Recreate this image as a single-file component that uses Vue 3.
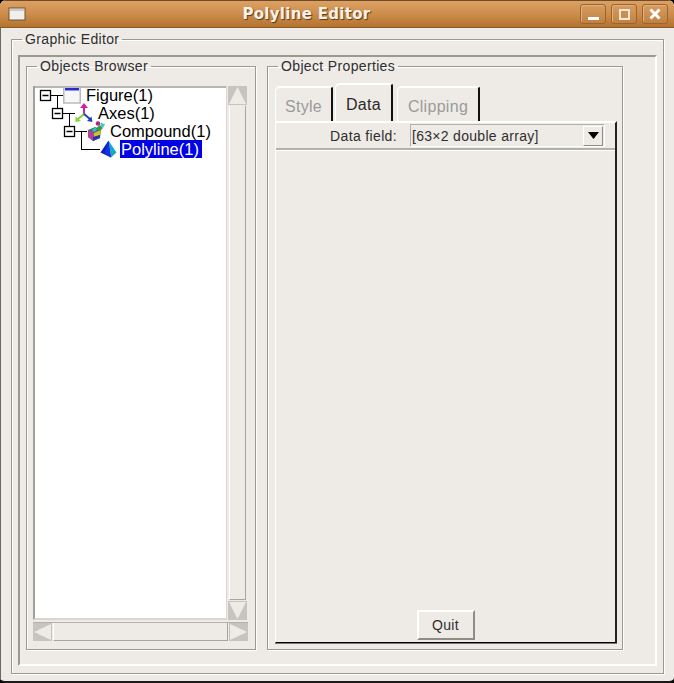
<script setup>
const rows = [
  { label: 'Figure(1)', depth: 0, kind: 'figure', box: true, drop: 22 },
  { label: 'Axes(1)', depth: 1, kind: 'axes', box: true, drop: 22 },
  { label: 'Compound(1)', depth: 2, kind: 'compound', box: true, drop: 28 },
  { label: 'Polyline(1)', depth: 3, kind: 'polyline', box: false, selected: true },
]
const tabs = [
  { label: 'Style', active: false },
  { label: 'Data', active: true },
  { label: 'Clipping', active: false },
]
</script>

<template>
  <div class="window">
    <header class="titlebar">
      <svg class="menu-icon" width="18" height="14" viewBox="0 0 18 14">
        <rect x="1" y="1" width="16" height="12" fill="#f1efec" stroke="#6f5236" />
        <rect x="2" y="2" width="14" height="2" fill="#cfcac4" />
      </svg>
      <h1 class="title">Polyline Editor</h1>
      <div class="controls">
        <span class="ctl"><i class="min"></i></span>
        <span class="ctl"><i class="max"></i></span>
        <span class="ctl">
          <svg width="14" height="14" viewBox="0 0 14 14">
            <path d="M2.5 2.5 11.5 11.5M11.5 2.5 2.5 11.5" stroke="#fff" stroke-width="3" />
          </svg>
        </span>
      </div>
    </header>

    <main class="client">
      <fieldset class="group editor">
        <legend>Graphic Editor</legend>
        <div class="sunken">
          <fieldset class="group browser">
            <legend>Objects Browser</legend>
            <div class="browser-grid">
              <div class="tree">
                <div
                  v-for="row in rows"
                  :key="row.label"
                  class="row"
                  :style="{ marginLeft: row.depth * 12 + 'px' }"
                >
                  <svg class="conn" width="23" height="18" viewBox="0 0 23 18">
                    <template v-if="row.box">
                      <path :d="`M17.5 9.5V${row.drop}M11 9.5H23`" stroke="#000" fill="none" />
                      <rect x="0.5" y="4.5" width="10" height="10" fill="#fff" stroke="#000" stroke-width="1.3" />
                      <path d="M2.5 9.5H8.5" stroke="#000" stroke-width="1.3" />
                    </template>
                    <path v-else d="M5.5 9.5H24" stroke="#000" fill="none" />
                  </svg>

                  <svg v-if="row.kind === 'figure'" class="icon" width="18" height="18" viewBox="0 0 18 18">
                    <rect x="0.75" y="1.5" width="16.5" height="15.5" fill="#f6f6f6" stroke="#b9b9c0" stroke-width="1.5" />
                    <rect x="2" y="2" width="14" height="2.5" fill="#2a2ad0" />
                  </svg>
                  <svg v-else-if="row.kind === 'axes'" class="icon" width="18" height="20" viewBox="0 0 18 20">
                    <path d="M9 11V3" stroke="#d81ea0" stroke-width="2" />
                    <path d="M5 5 9 0l4 5z" fill="#d81ea0" />
                    <path d="M9 11 3 16" stroke="#7fd33a" stroke-width="2" />
                    <path d="M0.5 13.5 0.5 19 6 18z" fill="#7fd33a" />
                    <path d="M9 11 15 16" stroke="#1f3fb8" stroke-width="2" />
                    <path d="M17.5 19 12 18 16.5 13.5z" fill="#1f3fb8" />
                  </svg>
                  <svg v-else-if="row.kind === 'compound'" class="icon" width="18" height="20" viewBox="0 0 18 20">
                    <path d="M1 9 8 6 14 9 13 17 6 20 1 16z" fill="#2f7d6c" />
                    <path d="M1 9 7 12 6 20 1 16z" fill="#c03a9a" />
                    <path d="M7 12 14 9 13 14 7 16z" fill="#d8c020" />
                    <path d="M6 16 13 14 13 17 6 20z" fill="#2436b0" />
                    <path d="M5 9 8 6 10 9 7 11z" fill="#3fb8c0" />
                    <path d="M9 7 13 4 16 7 13 10z" fill="#3f9a52" />
                    <circle cx="11" cy="2.5" r="2.3" fill="#a82a8a" />
                    <path d="M14 1.5 18 3.5 16 7 13.5 5z" fill="#4fc4c4" />
                  </svg>
                  <svg v-else class="icon poly" width="17" height="18" viewBox="0 0 17 18">
                    <path d="M8.5 0.5 0.5 12.5 11 17.5z" fill="#0c1fc4" />
                    <path d="M8.5 0.5 11 17.5 16.5 12.5z" fill="#18a8c8" />
                    <path d="M8.5 0.5 4.5 13 11 17.5z" fill="#1430e0" />
                  </svg>

                  <span class="node" :class="{ selected: row.selected }">{{ row.label }}</span>
                </div>
              </div>

              <div class="vscroll">
                <span class="arrow"><svg width="19" height="19" viewBox="0 0 19 19"><path d="M1 18 9.5 1 18 18z" fill="#eeebe7" /></svg></span>
                <span class="thumb"></span>
                <span class="arrow"><svg width="19" height="19" viewBox="0 0 19 19"><path d="M1 1 9.5 18 18 1z" fill="#eeebe7" /></svg></span>
              </div>
              <div class="hscroll">
                <span class="arrow"><svg width="19" height="18" viewBox="0 0 19 18"><path d="M18 1 1 9 18 17z" fill="#eeebe7" /></svg></span>
                <span class="thumb"></span>
                <span class="arrow"><svg width="19" height="18" viewBox="0 0 19 18"><path d="M1 1 18 9 1 17z" fill="#eeebe7" /></svg></span>
              </div>
            </div>
          </fieldset>

          <fieldset class="group props">
            <legend>Object Properties</legend>
            <div class="tabs">
              <button
                v-for="tab in tabs"
                :key="tab.label"
                class="tab"
                :class="{ active: tab.active }"
                type="button"
              >{{ tab.label }}</button>
            </div>
            <section class="panel">
              <div class="field-row">
                <label class="field-label">Data field:</label>
                <div class="combo">
                  <span class="combo-text">[63×2 double array]</span>
                  <span class="combo-btn">
                    <svg width="11" height="7" viewBox="0 0 11 7"><path d="M0 0H11L5.5 7z" fill="#000" /></svg>
                  </span>
                </div>
              </div>
              <button class="quit" type="button">Quit</button>
            </section>
          </fieldset>
        </div>
      </fieldset>
    </main>
  </div>
</template>

<style>
html, body { margin: 0; background: #000; }
</style>

<style scoped>
.window {
  width: 674px;
  height: 683px;
  box-sizing: border-box;
  display: flex;
  flex-direction: column;
  background: #eeebe7;
  border-radius: 6px 6px 5px 5px;
  border-bottom: 2px solid #1c1a18;
  overflow: hidden;
  font-family: "Liberation Sans", Arial, sans-serif;
  color: #2e2e2e;
}
.titlebar {
  height: 28px;
  flex: none;
  box-sizing: border-box;
  display: flex;
  align-items: center;
  position: relative;
  padding: 0 6px 0 8px;
  background: linear-gradient(#dba163 0%, #cf8f4e 45%, #b4732f 100%);
  border-bottom: 1px solid #8b5a26;
  border-top: 1px solid #6e4a28;
}
.menu-icon { flex: none; }
.title {
  flex: 1;
  margin: 0;
  padding-left: 7px;
  text-align: center;
  font: bold 15px "DejaVu Sans", sans-serif;
  letter-spacing: 0.3px;
  color: #f6f1e9;
  text-shadow: 1px 1px 1px #5a3a18;
}
.controls { display: flex; gap: 5px; }
.ctl {
  width: 26px;
  height: 20px;
  box-sizing: border-box;
  display: flex;
  align-items: center;
  justify-content: center;
  border: 1px solid #99642f;
  border-radius: 3px;
  background: linear-gradient(#d79c60, #bf8240);
  box-shadow: inset 1px 1px 0 #e3b17e;
}
.min { display: block; width: 11px; height: 3px; background: #fff; margin-top: 8px; }
.max { display: block; width: 11px; height: 11px; box-sizing: border-box; border: 2px solid #f3e6d6; background: #c98f52; }

.client {
  flex: 1;
  min-height: 0;
  box-sizing: border-box;
  padding: 2px 10px 7px 11px;
  border-left: 1px solid #6a6865;
}
.group {
  margin: 0;
  min-width: 0;
  box-sizing: border-box;
  border: 1px solid #9b9894;
  box-shadow: 1px 1px 0 #fff, inset 1px 1px 0 #fff;
}
.group > legend {
  font-size: 14px;
  line-height: 18px;
  letter-spacing: 0.35px;
  padding: 0 3px;
  margin-left: 4px;
}
.editor { height: 644px; padding: 7px 6px 6px 6px; margin-left: -1px; }
.sunken {
  height: 611px;
  box-sizing: border-box;
  display: flex;
  gap: 11px;
  padding: 0 0 0 6px;
  border-top: 2px solid #9b9894;
  border-left: 2px solid #9b9894;
  border-right: 2px solid #fff;
  border-bottom: 2px solid #fff;
}
.browser { width: 230px; height: 593px; padding: 0 6px 0 6px; }
.props { width: 356px; height: 593px; padding: 0 5px 0 6px; }

.browser-grid {
  display: grid;
  grid-template-columns: 194px 20px;
  grid-template-rows: 534px 19px;
  column-gap: 1px;
  row-gap: 2px;
  margin-top: 11px;
}
.tree {
  box-sizing: border-box;
  background: #fff;
  border-left: 2px solid #a3a09c;
  border-right: 1px solid #d9d6d2;
  border-bottom: 2px solid #d9d6d2;
  box-shadow: inset 0 2px 0 #b9b6b2;
  padding: 0 0 0 5px;
  color: #000;
}
.row {
  height: 18px;
  display: flex;
  align-items: center;
  position: relative;
  font-size: 16.5px;
}
.conn { flex: none; overflow: visible; }
.icon { flex: none; margin-right: 5px; }
.poly { margin-left: 1px; margin-right: 3px; }
.node { line-height: 18px; white-space: nowrap; }
.selected { background: #0000e6; color: #fff; padding: 0 3px 0 1px; }

.arrow { flex: none; display: block; background: #c6c4c1; line-height: 0; }
.vscroll { display: flex; flex-direction: column; width: 19px; }
.vscroll .thumb {
  flex: 1;
  margin: 1px;
  background: #eeebe7;
  border-left: 1px solid #fff;
  border-right: 1px solid #a8a5a1;
  border-bottom: 1px solid #a8a5a1;
}
.hscroll {
  grid-column: 1 / 3;
  display: flex;
  width: 215px;
  border-top: 1px solid #b4b1ad;
  box-sizing: border-box;
}
.hscroll .thumb {
  flex: 1;
  margin: 0 1px;
  background: #eeebe7;
  border-left: 1px solid #fff;
  border-right: 1px solid #a8a5a1;
  border-bottom: 1px solid #a8a5a1;
}

.tabs { display: flex; align-items: flex-end; gap: 2px; height: 40px; margin-top: 6px; margin-left: 1px; }
.tab {
  width: 58px;
  height: 35px;
  box-sizing: border-box;
  padding: 4px 0 0 0;
  background: #eeebe7;
  font: 16px "Liberation Sans", Arial, sans-serif;
  letter-spacing: 0.3px;
  color: #9a9a9a;
  border: 0;
  border-top: 2px solid #fff;
  border-left: 1px solid #fff;
  border-right: 2px solid #111;
  border-radius: 5px 3px 0 0;
}
.tab:last-child { width: 83px; margin-left: 2px; }
.tab.active { height: 38px; color: #2a2a2a; padding-top: 4px; }
.panel {
  width: 342px;
  height: 522px;
  margin-left: 1px;
  box-sizing: border-box;
  display: flex;
  flex-direction: column;
  align-items: center;
  border-top: 2px solid #fff;
  border-left: 1px solid #fff;
  border-right: 2px solid #222;
  border-bottom: 1px solid #000;
  box-shadow: 0 1px 0 #77756f;
}
.field-row {
  width: 100%;
  height: 27px;
  flex: none;
  box-sizing: border-box;
  display: flex;
  align-items: center;
  border-bottom: 2px solid #b4b1ad;
  box-shadow: 0 1px 0 #fff;
}
.field-label {
  width: 121px;
  flex: none;
  text-align: right;
  font-size: 14px;
  letter-spacing: 0.35px;
}
.combo {
  width: 195px;
  height: 23px;
  margin-left: 13px;
  box-sizing: border-box;
  display: flex;
  align-items: center;
  justify-content: space-between;
  padding: 0 1px 0 1px;
  background: #eeebe7;
  border-left: 1px solid #b4b1ad;
  border-top: 1px solid #b4b1ad;
  border-right: 1px solid #fff;
  border-bottom: 1px solid #fff;
}
.combo-text { font-size: 14px; letter-spacing: 0.3px; }
.combo-btn {
  width: 20px;
  height: 20px;
  box-sizing: border-box;
  display: flex;
  align-items: center;
  justify-content: center;
  border-top: 1px solid #fff;
  border-left: 1px solid #fff;
  border-right: 1px solid #8f8c88;
  border-bottom: 1px solid #8f8c88;
}
.quit {
  margin-top: auto;
  margin-bottom: 2px;
  width: 58px;
  height: 30px;
  box-sizing: border-box;
  padding: 0;
  background: #eeebe7;
  font: 14px "Liberation Sans", Arial, sans-serif;
  letter-spacing: 0.35px;
  color: #2e2e2e;
  border-top: 2px solid #fff;
  border-left: 2px solid #fff;
  border-right: 2px solid #8f8c88;
  border-bottom: 2px solid #8f8c88;
}
</style>
